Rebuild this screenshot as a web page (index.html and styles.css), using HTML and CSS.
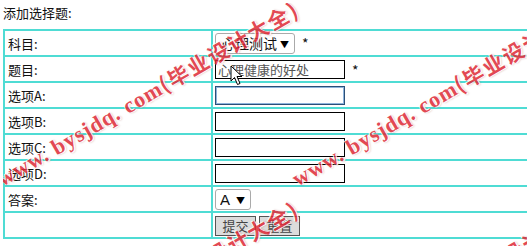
FILE: index.html
```html
<!DOCTYPE html>
<html>
	<head>
		<title>添加选择题</title>
		<meta charset="utf-8" />
		<link rel="stylesheet" href="styles.css">
	</head>
	<body>
		<div class="title">添加选择题:</div>
		<table class="form">
			<tr>
				<td class="label">科目:</td>
				<td>
					<span class="pick"><select><option>心理测试</option></select></span>
					<span class="star">*</span>
				</td>
			</tr>
			<tr>
				<td class="label">题目:</td>
				<td><input class="field" type="text" value="心理健康的好处" /> <span class="star">*</span></td>
			</tr>
			<tr>
				<td class="label">选项A:</td>
				<td><input class="field focus" type="text" /></td>
			</tr>
			<tr>
				<td class="label">选项B:</td>
				<td><input class="field" type="text" /></td>
			</tr>
			<tr>
				<td class="label">选项C:</td>
				<td><input class="field" type="text" /></td>
			</tr>
			<tr>
				<td class="label">选项D:</td>
				<td><input class="field" type="text" /></td>
			</tr>
			<tr>
				<td class="label">答案:</td>
				<td><span class="pick small"><select><option>A</option><option>B</option><option>C</option><option>D</option></select></span></td>
			</tr>
			<tr>
				<td class="label"></td>
				<td><button class="btn">提交</button><button class="btn">重置</button></td>
			</tr>
		</table>

		<!-- watermark + mouse pointer lie over the form -->
		<div class="wm w1">www. bysjdq. com<span class="cn">(毕业设计大全)</span></div>
		<div class="wm w2">www. bysjdq. com<span class="cn">(毕业设计大全)</span></div>
		<div class="wm w3">www. bysjdq. com<span class="cn">(毕业设计大全)</span></div>
		<div class="wm w4">www. bysjdq. com<span class="cn">(毕业设计大全)</span></div>
		<svg class="cursor" width="14" height="22" viewBox="0 0 14 22">
			<path d="M1 1 L1 16 L4.5 12.5 L7.5 19.5 L10 18.5 L7 11.5 L12 11.5 Z" fill="#fff" stroke="#000" stroke-width="1"/>
		</svg>
	</body>
</html>
```

FILE: styles.css
```css
*{ box-sizing: border-box; }
html, body{ overflow: hidden; }
body{
	margin: 3px;
	font-family: "Noto Sans CJK SC", "Liberation Sans", sans-serif;
	font-size: 13px; color: #111; background: #fff;
	position: relative; height: 243px;
}
.title{ line-height: 18px; height: 18px; margin: 1px 0 7px 0; }

.form{
	border-collapse: collapse;
	width: 545px;
}
.form td{
	border: 2px solid #4fdcd4;
	height: 26px; padding: 0 2px;
	vertical-align: middle;
}
.form td.label{ width: 208px; padding-left: 3px; }

.pick{ position: relative; display: inline-block; vertical-align: middle; }
.pick select{
	-webkit-appearance: none; appearance: none;
	height: 21px; width: 80px;
	padding: 0 14px 0 5px;
	border: 1px solid #aaa; border-radius: 3px;
	background: #fff; color: #111;
	font-family: "Noto Sans CJK SC", sans-serif; font-size: 14px;
	line-height: 19px;
}
.pick::after{
	content: "\25BC"; position: absolute; right: 6px; top: 5px;
	font-size: 9px; color: #000; pointer-events: none;
}
.pick.small select{ width: 36px; padding-left: 4px; padding-right: 0; font-family: "Liberation Sans", sans-serif; font-size: 15px; }
.pick.small::after{ right: 6px; }
.star{ font-size: 14px; margin-left: 4px; vertical-align: middle; }

.field{
	width: 130px; height: 19px;
	border: 1px solid #000; padding: 0 2px;
	font-family: "Noto Sans CJK SC", sans-serif; font-size: 13px; color: #555;
	vertical-align: middle; outline: none;
}
.field.focus{ border-color: #2b4f77; box-shadow: 0 0 0 1px #8fb4dc inset; }

.btn{
	width: 41px; height: 20px; margin-right: 3px;
	background: #dcdcdc; border: 1px solid #555; border-radius: 0;
	font-family: "Noto Sans CJK SC", sans-serif; font-size: 13px; color: #444;
	padding: 0; line-height: 17px; vertical-align: middle;
}

.wm{
	position: absolute; white-space: nowrap;
	transform-origin: 0 100%; transform: rotate(-30deg);
	font-family: "Liberation Serif", serif; font-weight: bold; font-size: 22px;
	letter-spacing: 1px;
	color: #de2a36; opacity: 0.85; line-height: 24px;
	text-shadow: 1px 1px 0 #fff, -1px -1px 0 #fff, 1px 1px 2px rgba(120,0,0,0.4);
	pointer-events: none;
}
.wm .cn{ font-family: "Noto Sans CJK SC", serif; font-size: 21px; letter-spacing: 2px; }
.w1{ left: 2px; top: 162px; }
.w2{ left: 297px; top: 162px; }
.w3{ left: 2px; top: 362px; }
.w4{ left: 297px; top: 362px; }

.cursor{ position: absolute; left: 227px; top: 62px; }
```
